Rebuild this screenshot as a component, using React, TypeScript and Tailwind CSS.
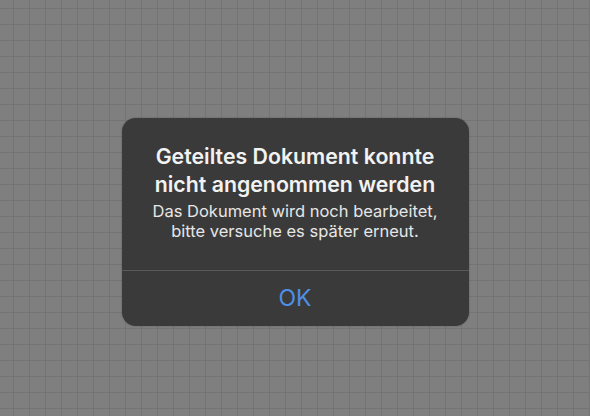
export default function App() {
  return (
    <div
      className="w-[590px] h-[416px] overflow-hidden bg-[#7f7f7f] bg-[linear-gradient(to_right,#747474_1px,transparent_1px),linear-gradient(to_bottom,#747474_1px,transparent_1px)] bg-[size:16px_16px] bg-[position:13px_8px] flex justify-center pt-[118px]"
      style={{ fontFamily: 'Inter, "Noto Sans", sans-serif' }}
    >
      <div className="w-[347px] h-[208px] rounded-[14px] bg-[#3a3a3a] flex flex-col shadow-[0_0_2px_rgba(0,0,0,0.3)]">
        <div className="flex-1 flex flex-col items-center pt-[24px] px-2 text-center">
          <h1 className="text-[21.3px] leading-[28px] font-semibold text-[#f2f2f2]">
            Geteiltes Dokument konnte
            <br />
            nicht angenommen werden
          </h1>
          <p className="mt-[3px] text-[16.5px] leading-[20px] text-[#e6e6e6]">
            Das Dokument wird noch bearbeitet,
            <br />
            bitte versuche es später erneut.
          </p>
        </div>
        <div className="h-px bg-[#5a5a5a]" />
        <button className="h-[55px] flex items-center justify-center text-[23px] text-[#4f8fe6]">
          OK
        </button>
      </div>
    </div>
  );
}
